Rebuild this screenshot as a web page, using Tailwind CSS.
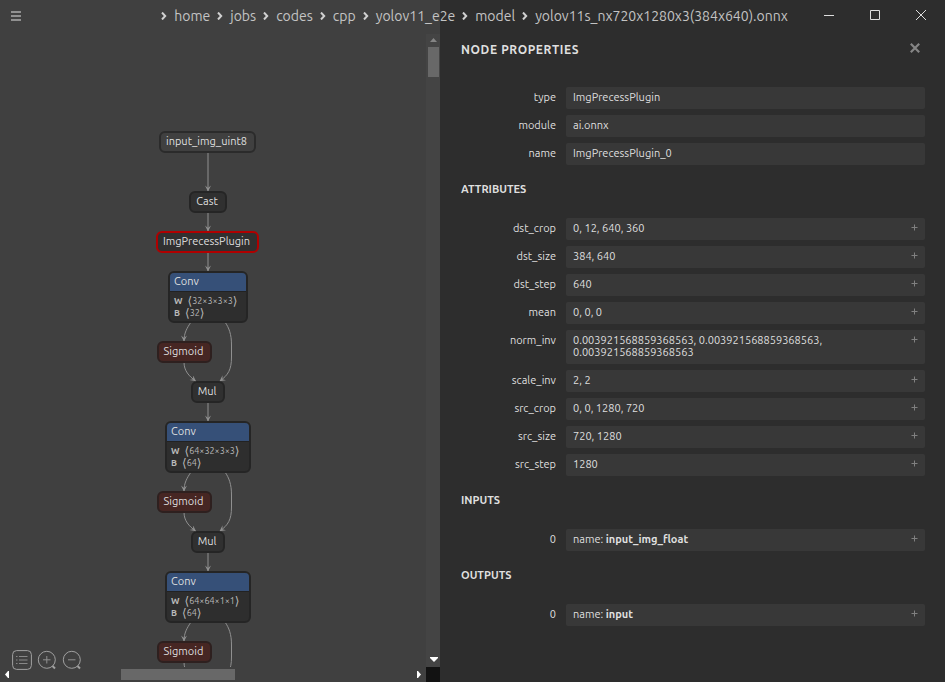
<!DOCTYPE html>
<html lang="en">
<head>
<meta charset="utf-8">
<title>yolov11s_nx720x1280x3(384x640).onnx</title>
<script src="https://cdn.jsdelivr.net/npm/@tailwindcss/browser@4"></script>
</head>
<body class="relative flex h-screen overflow-hidden bg-[#404040] font-['Ubuntu','Noto_Sans',sans-serif] text-[11px] leading-3 text-[#dfdfdf]">

<header class="pointer-events-none absolute inset-x-0 top-0 z-20 h-8">
  <nav aria-label="Path" class="flex h-8 items-center justify-center gap-[7px] pl-1 text-sm leading-4 whitespace-nowrap text-[#c4c4c4]" id="path"></nav>
  <button aria-label="Menu" class="pointer-events-auto absolute top-0 left-0 flex h-8 w-8 items-center justify-center">
    <svg width="10" height="10" viewBox="0 0 10 10" stroke="#aaa" stroke-width="1.6"><path d="M0 1H10M0 5H10M0 9H10"/></svg>
  </button>
  <div class="pointer-events-auto absolute top-0 right-0 flex h-[30px] pr-px">
    <button aria-label="Minimize" class="flex w-[46px] items-center justify-center"><svg width="10" height="10" viewBox="0 0 10 10" stroke="#ddd"><path d="M0 5.500H10"/></svg></button>
    <button aria-label="Maximize" class="flex w-[46px] items-center justify-center"><svg width="10" height="10" viewBox="0 0 10 10" stroke="#ddd" fill="none"><path d="M.5.5H9.500V9.500H.5Z"/></svg></button>
    <button aria-label="Close window" class="flex w-[46px] items-center justify-center"><svg width="10" height="10" viewBox="0 0 10 10" stroke="#ddd"><path d="M0 0L10 10M10 0L0 10"/></svg></button>
  </div>
</header>

<main class="flex min-w-0 flex-1 flex-col">
  <div class="flex min-h-0 flex-1">
    <div class="relative min-w-0 flex-1 overflow-hidden" id="graph">
      <svg class="absolute top-0 left-0 overflow-visible" width="427" height="667" fill="none" stroke="#909090">
        <defs>
          <marker id="arrow" viewBox="0 0 10 10" refX="9" refY="5" markerUnits="userSpaceOnUse" markerWidth="7" markerHeight="6" orient="auto"><path d="M0 0L10 5L0 10L4 5Z" fill="#909090" stroke="none"/></marker>
        </defs>
        <g marker-end="url(#arrow)">
          <path d="M208 153V191"/><path d="M208 213V231"/><path d="M208 253V271"/>
          <path d="M208 402V421"/><path d="M208 552V571"/>
          <path d="M191 322C187 328 184 333 184 341"/><path d="M184 362C184 371 189 376 195.500 381"/>
          <path d="M225 322C229 328 231.500 334 231.500 345V357C231.500 370 228 375 220 381"/>
          <path d="M191 472C187 478 184 483 184 491"/><path d="M184 512C184 521 189 526 195.500 531"/>
          <path d="M225 472C229 478 231.500 484 231.500 495V507C231.500 520 228 525 220 531"/>
          <path d="M191 622C187 628 184 633 184 641"/><path d="M184 662C184 671 189 676 195.500 681"/>
          <path d="M225 622C229 628 231.500 634 231.500 645V657C231.500 670 228 675 220 681"/>
        </g>
      </svg>
    </div>
    <div class="mt-[34px] flex w-3.5 flex-col items-center bg-[#444]" aria-hidden="true">
      <svg width="13" height="13" viewBox="0 0 13 13" fill="#858585"><path d="M3 8L6.500 4L10 8Z"/></svg>
      <div class="h-[30px] w-[11px] bg-[#686868]"></div>
      <svg class="mt-auto" width="13" height="16" viewBox="0 0 13 16" fill="#fff"><path d="M3 6H11V7L7 11L3 7Z"/></svg>
    </div>
  </div>
  <div class="flex h-[15px] items-center" aria-hidden="true">
    <svg width="14" height="15" viewBox="0 0 14 15" fill="#fff"><path d="M9 4V11H8L5 7.500L8 4Z"/></svg>
    <div class="flex flex-1"><div class="ml-[27%] h-[11px] w-[28.5%] bg-[#686868]"></div></div>
    <svg width="14" height="15" viewBox="0 0 14 15" fill="#fff"><path d="M5 4V11H6L9 7.500L6 4Z"/></svg>
    <div class="h-full w-3.5 bg-[#121212]"></div>
  </div>
</main>

<div class="absolute bottom-3 left-3 z-10 flex gap-[5px]">
  <button aria-label="Model properties"><svg width="20" height="20" viewBox="0 0 20 20" fill="none" stroke="#a0a0a0"><rect x=".6" y=".6" width="18.800" height="18.800" rx="4"/><path d="M7 6.500H15.500M7 10H15.500M7 13.500H15.500M4 6.500H5.500M4 10H5.500M4 13.500H5.500" stroke="#888"/></svg></button>
  <button aria-label="Zoom in"><svg width="20" height="20" viewBox="0 0 20 20" fill="none" stroke="#a0a0a0"><circle cx="9.800" cy="9.800" r="8.500"/><path d="M15.500 16L18 18.500" stroke-width="2"/><path d="M6 9.800H13.500M9.800 6V13.500" stroke="#909090"/></svg></button>
  <button aria-label="Zoom out"><svg width="20" height="20" viewBox="0 0 20 20" fill="none" stroke="#a0a0a0"><circle cx="9.800" cy="9.800" r="8.500"/><path d="M15.500 16L18 18.500" stroke-width="2"/><path d="M6 9.800H13.500" stroke="#909090"/></svg></button>
</div>

<aside class="w-[505px] max-w-full shrink-0 overflow-hidden bg-[#2d2d2d] pt-[38px] pr-5 pl-[21px]">
  <div class="mb-[25px] flex h-6 items-center justify-between">
    <h1 class="text-xs font-bold tracking-wider">NODE PROPERTIES</h1>
    <button aria-label="Close" class="flex h-6 w-5 justify-center pt-[5px]"><svg width="10" height="10" viewBox="0 0 10 10" stroke="#858585" stroke-width="2.200"><path d="M.8.8L9.200 9.200M9.200.8L.8 9.200"/></svg></button>
  </div>
  <div id="props"></div>
</aside>

<script>
const path = ['home', 'jobs', 'codes', 'cpp', 'yolov11_e2e', 'model', 'yolov11s_nx720x1280x3(384x640).onnx'];
document.getElementById('path').innerHTML = path.map(p =>
  `<svg width="6" height="8" viewBox="0 0 6 8" fill="none" stroke="#d0d0d0" stroke-width="2"><path d="M1 .5L4.200 4L1 7.500"/></svg><a href="#" class="pointer-events-auto">${p}</a>`).join('');

const box = 'absolute flex items-center justify-center rounded-[6px] border-2 pr-0.5 pb-0.5 whitespace-nowrap ';
const dark = box + 'bg-[#303030] border-[#252525]';
const nodes = [
  [159, 131, 97, 22, 'input_img_uint8', box + 'bg-[#404040] border-[#2b2b2b]'],
  [189, 191, 38, 22, 'Cast', dark],
  [156, 231, 103, 22, 'ImgPrecessPlugin', box + 'bg-[#303030] border-[#b00000]'],
];
for (const y of [341, 491, 641]) nodes.push([157, y, 55, 22, 'Sigmoid', box + 'bg-[#462623] border-[#2e201f]']);
for (const y of [381, 531]) nodes.push([191, y, 34, 22, 'Mul', dark]);
const at = (x, y, w, h) => `style="left:${x}px;top:${y}px;width:${w}px;height:${h}px"`;
const bracket = b => `<i class="font-['DejaVu_Sans',sans-serif] text-xs leading-3 not-italic">${b}</i>`;
const param = (k, v) => `<p class="flex items-center gap-[5px]"><b>${k}</b><span class="flex items-center">${bracket('⟨')}${v}${bracket('⟩')}</span></p>`;
let html = nodes.map(([x, y, w, h, t, c]) => `<div class="${c}" ${at(x, y, w, h)}>${t}</div>`).join('');
for (const [x, y, w, W, B] of [[168, 271, 80, '32×3×3×3', '32'], [165, 421, 86, '64×32×3×3', '64'], [165, 571, 86, '64×64×1×1', '64']]) {
  html += `<div class="absolute overflow-hidden rounded-[6px] border-2 border-[#252525] bg-[#2e2e2e] whitespace-nowrap" ${at(x, y, w, 52)}>
    <div class="h-[19px] border-b border-[#222] bg-[#365078] px-1 leading-4">Conv</div>
    <div class="px-1 pt-[3px] text-[9px] leading-3 text-[#bababa]">${param('W', W)}${param('B', B)}</div></div>`;
}
document.getElementById('graph').insertAdjacentHTML('beforeend', html);

const groups = [
  ['', [['type', 'ImgPrecessPlugin'], ['module', 'ai.onnx'], ['name', 'ImgPrecessPlugin_0']]],
  ['ATTRIBUTES', [['dst_crop', '0, 12, 640, 360'], ['dst_size', '384, 640'], ['dst_step', '640'], ['mean', '0, 0, 0'],
    ['norm_inv', '0.003921568859368563, 0.003921568859368563, 0.003921568859368563'], ['scale_inv', '2, 2'],
    ['src_crop', '0, 0, 1280, 720'], ['src_size', '720, 1280'], ['src_step', '1280']]],
  ['INPUTS', [['0', 'name: <b>input_img_float</b>']]],
  ['OUTPUTS', [['0', 'name: <b>input</b>']]],
];
document.getElementById('props').innerHTML = groups.map(([title, rows]) =>
  (title ? `<h2 class="mt-3 mb-[17px] h-6 font-bold leading-6">${title}</h2>` : '') +
  '<dl class="flex flex-col gap-1.5">' + rows.map(([k, v]) =>
    `<div class="flex gap-2.5"><dt class="w-[95px] shrink-0 pt-1 pb-1.5 text-right">${k}</dt>
     <dd class="flex min-w-0 flex-1 items-start justify-between rounded-xs bg-[#383838] px-[7px] pt-1 pb-1.5"><span>${v}</span>${title ? `<button aria-label="Expand ${k}" class="mt-[2px] ml-3 flex shrink-0"><svg width="7" height="7" viewBox="0 0 7 7" stroke="#808080"><path d="M.5 3.500H6.500M3.500.5V6.500"/></svg></button>` : ''}</dd></div>`).join('') + '</dl>').join('');
</script>
</body>
</html>
